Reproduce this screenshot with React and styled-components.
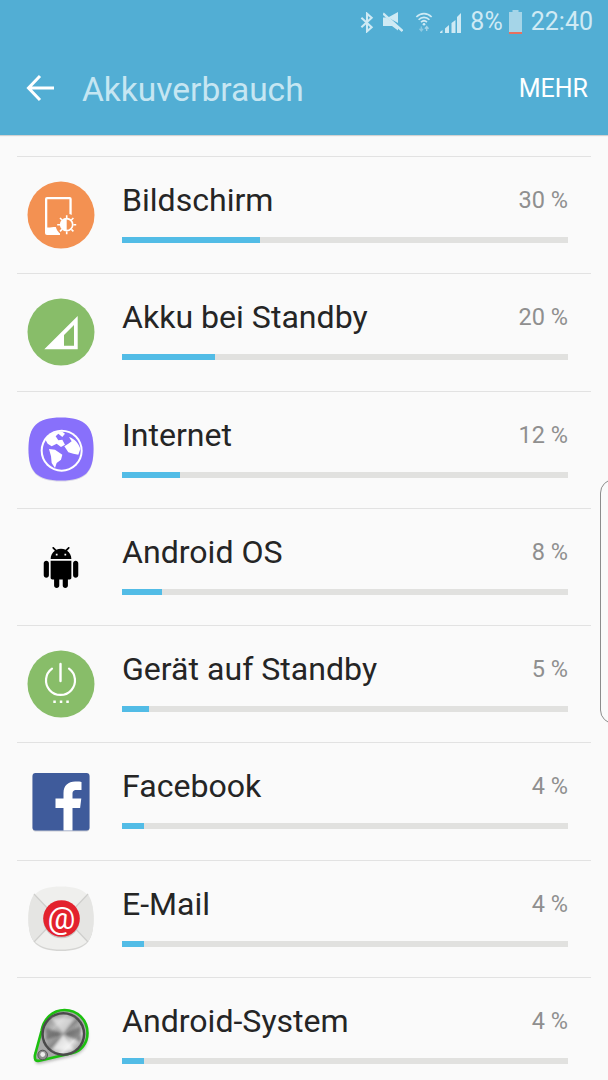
import React from 'react';
import styled, { createGlobalStyle } from 'styled-components';

const Global = createGlobalStyle`
  html, body { margin: 0; padding: 0; background: #fafafa; }
  body { width: 608px; height: 1080px; overflow: hidden; font-family: Roboto, "Liberation Sans", sans-serif; }
`;
const Screen = styled.div`
  position: relative; width: 608px; height: 1080px; overflow: hidden; background: #fafafa;
  display: flex; flex-direction: column;
`;
const Header = styled.header`
  flex: 0 0 135px; box-sizing: border-box; background: #52aed4;
  box-shadow: 0 1px 1px #d2d2d2; position: relative; z-index: 1;
  display: flex; flex-direction: column;
`;
const StatusBar = styled.div`
  height: 44px; display: flex; align-items: center; justify-content: flex-end;
  padding: 0 15px 0 0; color: #cfeaf4; font-size: 25px; line-height: 44px;
`;
const StatusIcon = styled.svg`
  display: block; flex: none; margin-right: ${p => p.$gap}px;
`;
const Pct = styled.span` margin-right: 5px; `;
const AppBar = styled.div`
  flex: 1; display: flex; align-items: center; padding: 0 20px 3px 26px;
`;
const Back = styled.svg` display: block; flex: none; margin-right: 27px; `;
const Title = styled.h1`
  flex: 1; margin: 0; padding-top: 3px; font-weight: 400; font-size: 33.5px; color: #c6e6f2; line-height: 1;
`;
const More = styled.span` font-size: 25px; color: #fff; `;
const List = styled.div`
  padding: 21px 17px 0;
`;
const Row = styled.div`
  box-sizing: border-box; height: 117.3px; border-top: 1px solid #e2e2e2;
  display: grid; grid-template-columns: 95px 1fr; padding: 0 23px 0 10px; align-items: center;
`;
const IconBox = styled.div`
  width: 68px; height: 68px; display: flex; align-items: center; justify-content: center;
`;
const Info = styled.div`
  display: flex; flex-direction: column; height: 100%; box-sizing: border-box; padding-top: 23px;
`;
const Line = styled.div`
  display: flex; justify-content: space-between; align-items: flex-start; height: 40px;
`;
const Name = styled.span` font-size: 32.1px; color: #252525; line-height: 40px; `;
const Value = styled.span` font-size: 23.5px; color: #8f8f8f; line-height: 40px; `;
const Track = styled.div`
  height: 6px; margin-top: 17px; background: #e1e1df;
`;
const Fill = styled.div`
  height: 100%; background: #52bce6;
`;
const Handle = styled.div`
  position: absolute; left: 600px; top: 479px; width: 28px; height: 245px; box-sizing: border-box;
  border: 1px solid #8c8c8c; border-radius: 17px; z-index: 2;
`;

const Circle = ({ fill, children }) => (
  <svg width="68" height="68" viewBox="0 0 68 68">
    <circle cx="34" cy="34" r="33.5" fill={fill} />
    {children}
  </svg>
);

const squircle = 'M34 1.5C58 1.5 66.5 10 66.5 33S58 64.5 34 64.5 1.5 56 1.5 33 10 1.5 34 1.5z';

const ScreenIcon = () => (
  <Circle fill="#f39152">
    <path d="M20 16h22.700a2 2 0 0 1 2 2v34a2 2 0 0 1-2 2H20a2 2 0 0 1-2-2V18a2 2 0 0 1 2-2z" fill="#fff" />
    <path d="M20.300 18.300h22.100v27.700H28C26 46 24 46.500 20.300 46.500z" fill="#f39152" />
    <path d="M33 44h14v12H33z" fill="#f39152" />
    <circle cx="39.700" cy="43.700" r="11" fill="#f39152" />
    <path d="M39.700 37.700a6 6 0 0 0 0 12z" fill="#fff" />
    <circle cx="39.700" cy="43.700" r="6" fill="none" stroke="#fff" strokeWidth="1.700" />
    <path d="M39.700 34.200v2.800M39.700 50.400v2.800M30.200 43.700h2.800M46.400 43.700h2.800M33 37l2 2M44.400 48.400l2 2M33 50.400l2-2M44.400 39l2-2" stroke="#fff" strokeWidth="1.600" />
  </Circle>
);
const StandbyIcon = () => (
  <Circle fill="#88bd69">
    <path d="M17.300 51.300 50.700 18v33.300zM37 47.700h10V27L37 37z" fill="#fff" fillRule="evenodd" />
  </Circle>
);
const InternetIcon = () => (
  <svg width="68" height="68" viewBox="0 0 68 68">
    <path d={squircle} fill="#d8d6e6" transform="translate(0 1)" />
    <path d={squircle} fill="#8870fb" />
    <g transform="translate(-2 -3) scale(.3333)">
      <circle cx="110" cy="113" r="63" fill="#fff" />
      <circle cx="110" cy="113" r="57" fill="#8870fb" />
      <path d="M60 78C72 62 95 54 112 56L120 62 112 72 100 62 92 70 100 82 112 80 120 95 108 102 95 92 80 100 68 92Z" fill="#fff" />
      <path d="M72 108 90 110 112 125 108 140 95 150 90 165 80 150 78 130Z" fill="#fff" />
      <path d="M132 72C150 78 162 92 166 108L160 125 145 122 130 118 118 100 130 92 140 85Z" fill="#fff" />
    </g>
  </svg>
);
const AndroidIcon = () => (
  <svg width="38" height="41" viewBox="1 0 22 24" preserveAspectRatio="none">
    <path fill="#000" d="M6 18c0 .55.45 1 1 1h1v3.500c0 .83.67 1.500 1.500 1.500s1.500-.67 1.500-1.500V19h2v3.500c0 .83.67 1.500 1.500 1.500s1.500-.67 1.500-1.500V19h1c.55 0 1-.45 1-1V8H6v10zM3.500 8C2.670 8 2 8.670 2 9.500v7c0 .83.67 1.500 1.500 1.500S5 17.330 5 16.500v-7C5 8.670 4.330 8 3.500 8zm17 0c-.83 0-1.500.67-1.500 1.500v7c0 .83.67 1.500 1.500 1.500s1.500-.67 1.500-1.500v-7c0-.83-.67-1.500-1.500-1.500zm-4.970-5.840l1.300-1.300c.2-.2.2-.51 0-.71-.2-.2-.51-.2-.71 0l-1.480 1.480C13.850 1.230 12.950 1 12 1c-.96 0-1.860.23-2.660.63L7.850.15c-.2-.2-.51-.2-.71 0-.2.2-.2.51 0 .71l1.310 1.310C6.970 3.260 6 5.010 6 7h12c0-1.990-.97-3.750-2.470-4.840zM10 5H9V4h1v1zm5 0h-1V4h1v1z" />
  </svg>
);
const PowerIcon = () => (
  <Circle fill="#88bd69">
    <path d="M25 18.700A14.500 14.500 0 1 0 42 18.700" fill="none" stroke="#fff" strokeWidth="2.200" strokeLinecap="round" />
    <path d="M33.500 14v17" stroke="#fff" strokeWidth="2.400" strokeLinecap="round" />
    <path d="M26.300 51.700h2.500M32.800 51.700h2.500M39.300 51.700h2.500" stroke="#fff" strokeWidth="2.400" />
  </Circle>
);
const FacebookIcon = () => (
  <svg width="60" height="60" viewBox="0 0 60 60">
    <rect x="1.500" y="2" width="57" height="57.500" rx="3" fill="#c9ccd4" />
    <rect x="1.500" y="1" width="57" height="57.500" rx="3" fill="#3f5b9b" />
    <path d="M32.500 58.500V36H24.500V26.500h8V21c0-7.500 4.800-11.500 11.700-11.500 3.300 0 5.300.2 6.300.4v8h-4.800c-3.700 0-4.200 1.800-4.200 4.400v4.200h8.800l-1.200 9.500h-7.600v22.500z" fill="#fff" />
  </svg>
);
const MailIcon = () => (
  <svg width="68" height="68" viewBox="0 0 68 68">
    <path d={squircle} fill="#d5d5d3" transform="translate(0 1.500)" />
    <path d={squircle} fill="#efefed" />
    <path d="M7 9 25 28 25 38 7 57C3 50 1.500 43 1.500 33S3 16 7 9zM61 9 43 28 43 38 61 57C65 50 66.500 43 66.500 33S65 16 61 9z" fill="#e5e5e3" />
    <path d="M7 9 25 28M61 9 43 28M7 57l18-19M61 57 43 38" stroke="#cfcfcd" strokeWidth="1.200" />
    <circle cx="34.500" cy="35" r="18.300" fill="#c9c9c7" />
    <circle cx="34.500" cy="33.500" r="18.300" fill="#e3222d" />
    <text x="34.500" y="44" textAnchor="middle" fontFamily="Roboto, sans-serif" fontSize="31" fill="#fff">@</text>
  </svg>
);
const SystemIcon = () => (
  <svg width="68" height="68" viewBox="0 0 68 68">
    <defs>
      <linearGradient id="metal" x1="0" y1="0" x2="1" y2="1">
        <stop offset="0" stopColor="#777" />
        <stop offset=".3" stopColor="#bdbdbd" />
        <stop offset=".5" stopColor="#8a8a8a" />
        <stop offset=".72" stopColor="#e4e4e4" />
        <stop offset="1" stopColor="#6e6e6e" />
      </linearGradient>
      <filter id="soft"><feGaussianBlur stdDeviation="1.600" /></filter>
      <filter id="soft2"><feGaussianBlur stdDeviation=".7" /></filter>
    </defs>
    <path d="M9 59C8 57 8 55 9 52L15 30C17 18 26 9 38 9 51 9 61 19 61 32 61 43 54 50 46 52L14 59.500C12 60 10 60 9 59z" fill="#666" opacity=".45" filter="url(#soft)" transform="translate(0 2)" />
    <path d="M9 59C8 57 8 55 9 52L15 30C17 18 26 9 38 9 51 9 61 19 61 32 61 43 54 50 46 52L14 59.500C12 60 10 60 9 59z" fill="#a8a8a8" stroke="#1cc00f" strokeWidth="2.600" strokeLinejoin="round" transform="translate(-.5 -1)" />
    <circle cx="36.300" cy="32" r="22" fill="#4a4a4a" />
    <circle cx="36.300" cy="32" r="19.500" fill="url(#metal)" />
    <g filter="url(#soft)">
      <path d="M36.300 32 24 16 48 16z" fill="#f2f2f2" opacity=".6" />
      <path d="M36.300 32 25 48 47 48z" fill="#f7f7f7" opacity=".75" />
      <path d="M36.300 32 19 26 19 38z" fill="#444" opacity=".55" />
      <path d="M36.300 32 54 24 54 40z" fill="#444" opacity=".55" />
    </g>
    <circle cx="15.700" cy="53" r="4.800" fill="#8f8f8f" stroke="#555" strokeWidth="1" />
    <circle cx="15.700" cy="52.500" r="2.400" fill="#eee" filter="url(#soft2)" />
  </svg>
);

const rows = [
  { name: 'Bildschirm', value: '30 %', width: 138, Icon: ScreenIcon },
  { name: 'Akku bei Standby', value: '20 %', width: 93, Icon: StandbyIcon },
  { name: 'Internet', value: '12 %', width: 58, Icon: InternetIcon },
  { name: 'Android OS', value: '8 %', width: 40, Icon: AndroidIcon },
  { name: 'Gerät auf Standby', value: '5 %', width: 27, Icon: PowerIcon },
  { name: 'Facebook', value: '4 %', width: 22, Icon: FacebookIcon },
  { name: 'E-Mail', value: '4 %', width: 22, Icon: MailIcon },
  { name: 'Android-System', value: '4 %', width: 22, Icon: SystemIcon },
];

export default function App() {
  return (
    <Screen>
      <Global />
      <Header>
        <StatusBar>
          <StatusIcon $gap={9} width="14" height="21" viewBox="0 0 15 22">
            <path d="M1.500 6l11 10-5 4.500v-19l5 4.500-11 10" fill="none" stroke="#cfeaf4" strokeWidth="2.200" />
          </StatusIcon>
          <StatusIcon $gap={12} width="20" height="21" viewBox="0 0 20 21">
            <path d="M5 5.500 15 0v11zM0 5.500h3L15 15v3.500L9 14H0z" fill="#cfeaf4" />
            <path d="M0 1.500 19.500 19" stroke="#cfeaf4" strokeWidth="2.400" />
          </StatusIcon>
          <StatusIcon $gap={7} width="18" height="24" viewBox="0 0 20 24">
            <path d="M1.500 6.500C6.500 1.500 13.500 1.500 18.500 6.500M4 9.500c3.500-3.500 8.500-3.500 12 0M6.700 12.200c2-2 4.600-2 6.600 0" fill="none" stroke="#cfeaf4" strokeWidth="1.800" />
            <circle cx="10" cy="14.500" r="1.500" fill="#cfeaf4" />
            <path d="M7 17v5M5 19.500l2 2.500 2-2.500" fill="none" stroke="#8cc9e2" strokeWidth="1.400" />
            <path d="M13 22v-5M11 19.500l2-2.500 2 2.500" fill="none" stroke="#a8d6e9" strokeWidth="1.400" />
          </StatusIcon>
          <StatusIcon $gap={9} width="21" height="21" viewBox="0 0 21 21">
            <path d="M0 21h2.500v-3L0 20zM5 21h4v-8l-4 3.500zM11.500 21h4V8l-4 3zM17 21h4V1l-4 4z" fill="#cfeaf4" />
          </StatusIcon>
          <Pct>8%</Pct>
          <StatusIcon $gap={8} width="15" height="24" viewBox="0 0 15 24">
            <path d="M4.500 0h6v2H14v22H1V2h3.500z" fill="#a5d5e8" />
            <rect x="1" y="22" width="13" height="2" fill="#e8705f" />
          </StatusIcon>
          <span>22:40</span>
        </StatusBar>
        <AppBar>
          <Back width="29" height="28" viewBox="0 0 29 28">
            <path d="M14 2 2.500 14 14 26M3 14h25" fill="none" stroke="#fff" strokeWidth="3" />
          </Back>
          <Title>Akkuverbrauch</Title>
          <More>MEHR</More>
        </AppBar>
      </Header>
      <List>
        {rows.map(({ name, value, width, Icon }) => (
          <Row key={name}>
            <IconBox><Icon /></IconBox>
            <Info>
              <Line>
                <Name>{name}</Name>
                <Value>{value}</Value>
              </Line>
              <Track>
                <Fill style={{ width }} />
              </Track>
            </Info>
          </Row>
        ))}
      </List>
      <Handle />
    </Screen>
  );
}
